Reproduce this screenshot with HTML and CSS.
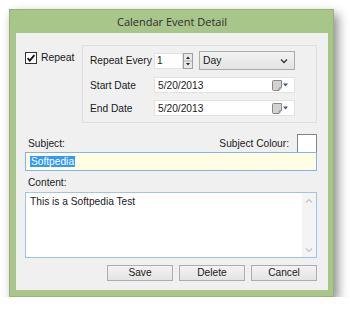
FILE: index.html
```html
<!DOCTYPE html>
<html>
<head>
<meta charset="utf-8">
<link rel="stylesheet" href="styles.css">
</head>
<body>
<div class="window">
  <div class="titlebar">Calendar Event Detail</div>
  <div class="client">
    <div class="top">
      <div class="repeat-check">
        <span class="cb"><svg width="12" height="12" viewBox="0 0 12 12"><rect x="0.5" y="0.5" width="11" height="11" fill="#fff" stroke="#333"/><path d="M2.6 6.2 L4.8 8.6 L9.4 3.2" fill="none" stroke="#111" stroke-width="1.8"/></svg></span>
        <span class="cb-label">Repeat</span>
      </div>
      <div class="group">
        <div class="lbl">Repeat Every</div>
        <div class="row1">
          <div class="spin">
            <div class="spin-input">1</div>
            <div class="spin-btns">
              <svg width="10" height="16" viewBox="0 0 10 16"><rect x="0.5" y="0.5" width="9" height="15" fill="#e8e8e8" stroke="#a0a0a0"/><line x1="1" y1="8" x2="9" y2="8" stroke="#b0b0b0"/><path d="M3 6 L5 3.5 L7 6 Z" fill="#222"/><path d="M3 10 L5 12.5 L7 10 Z" fill="#222"/></svg>
            </div>
          </div>
          <div class="select"><span>Day</span><svg width="8" height="6" viewBox="0 0 8 6"><path d="M1 1.5 L4 4.5 L7 1.5" fill="none" stroke="#333" stroke-width="1.3"/></svg></div>
        </div>
        <div class="lbl">Start Date</div>
        <div class="date"><span>5/20/2013</span><svg class="cal" width="17" height="11" viewBox="0 0 17 11"><path d="M0.5 1.5 Q0.5 0.5 1.5 0.5 L9.5 0.5 L9.5 7.5 L7 10.5 L1.5 10.5 Q0.5 10.5 0.5 9.5 Z" fill="#d2d2d2" stroke="#888"/><path d="M7 10.5 L7 8 L9.5 7.5" fill="#bdbdbd" stroke="#888" stroke-width="0.8"/><path d="M11 3.5 L16 3.5 L13.5 6.5 Z" fill="#3d5391"/></svg></div>
        <div class="lbl">End Date</div>
        <div class="date"><span>5/20/2013</span><svg class="cal" width="17" height="11" viewBox="0 0 17 11"><path d="M0.5 1.5 Q0.5 0.5 1.5 0.5 L9.5 0.5 L9.5 7.5 L7 10.5 L1.5 10.5 Q0.5 10.5 0.5 9.5 Z" fill="#d2d2d2" stroke="#888"/><path d="M7 10.5 L7 8 L9.5 7.5" fill="#bdbdbd" stroke="#888" stroke-width="0.8"/><path d="M11 3.5 L16 3.5 L13.5 6.5 Z" fill="#3d5391"/></svg></div>
      </div>
    </div>
    <div class="subject-row">
      <span class="lbl2">Subject:</span>
      <div class="colour">
        <span class="lbl2">Subject Colour:</span>
        <span class="swatch"></span>
      </div>
    </div>
    <div class="subject-input"><span class="sel">Softpedia</span></div>
    <div class="content-label">Content:</div>
    <div class="content">
      <div class="content-text">This is a Softpedia Test</div>
      <div class="scroll">
        <svg width="8" height="6" viewBox="0 0 8 6"><path d="M1 4.5 L4 1.5 L7 4.5" fill="none" stroke="#c4c4c4" stroke-width="1.2"/></svg>
        <svg width="8" height="6" viewBox="0 0 8 6"><path d="M1 1.5 L4 4.5 L7 1.5" fill="none" stroke="#c4c4c4" stroke-width="1.2"/></svg>
      </div>
    </div>
    <div class="buttons">
      <div class="btn">Save</div>
      <div class="btn">Delete</div>
      <div class="btn">Cancel</div>
    </div>
  </div>
</div>
</body>
</html>
```
FILE: styles.css
```css
html, body {
  margin: 0;
  padding: 0;
  background: #ffffff;
}
body {
  font-family: "Liberation Sans", Arial, sans-serif;
  font-size: 10px;
  color: #1a1a1a;
}
.window {
  margin: 9px 0 0 9px;
  width: 325px;
  height: 288px;
  box-sizing: border-box;
  background: #a8c58a;
  border: 1px solid #95b279;
  display: flex;
  flex-direction: column;
  box-shadow: 4px 5px 10px rgba(0, 0, 0, 0.45);
}
.titlebar {
  height: 23px;
  line-height: 24px;
  text-align: center;
  font-family: "Open Sans", "Noto Sans", sans-serif;
  font-size: 11px;
  color: #2e2e2e;
  padding-left: 1px;
}
.client {
  flex: 1;
  margin: 0 5px 6px 6px;
  background: #f0f0f0;
  box-sizing: border-box;
  padding: 12px 11px 9px 9px;
  display: flex;
  flex-direction: column;
}
.top {
  display: flex;
  height: 78px;
}
.repeat-check {
  width: 57px;
  padding-top: 7px;
  display: flex;
  align-items: flex-start;
  gap: 4px;
}
.cb {
  display: block;
  width: 12px;
  height: 12px;
}
.cb svg { display: block; }
.cb-label {
  line-height: 12px;
  font-size: 10.4px;
}
.group {
  flex: 1;
  border: 1px solid #dedede;
  padding: 5px 21px 0 7px;
  display: grid;
  grid-template-columns: 64px 1fr;
  grid-template-rows: 19px 16px 16px;
  row-gap: 7px;
  align-items: center;
}
.lbl {
  font-size: 10.2px;
  white-space: nowrap;
}
.row1 {
  display: flex;
  align-items: center;
  gap: 6px;
  height: 19px;
}
.spin {
  display: flex;
  height: 16px;
}
.spin-input {
  width: 29px;
  height: 16px;
  box-sizing: border-box;
  background: #fff;
  border: 1px solid #e2e2e2;
  padding-left: 2px;
  line-height: 14px;
}
.spin-btns svg { display: block; }
.select {
  flex: 1;
  height: 19px;
  box-sizing: border-box;
  border: 1px solid #acacac;
  background: linear-gradient(#f2f2f2, #e3e3e3);
  display: flex;
  align-items: center;
  justify-content: space-between;
  padding: 0 6px 0 3px;
  font-size: 10.4px;
}
.select svg { display: block; }
.date {
  height: 16px;
  box-sizing: border-box;
  background: #fff;
  border: 1px solid #e2e2e2;
  display: flex;
  align-items: center;
  justify-content: space-between;
  padding: 0 5px 0 3px;
  font-size: 10.2px;
}
.cal { display: block; }
.subject-row {
  margin-top: 11px;
  height: 18px;
  display: flex;
  justify-content: space-between;
  align-items: flex-start;
  padding-left: 3px;
}
.subject-row .lbl2 {
  line-height: 20px;
}
.lbl2 {
  font-size: 10.2px;
}
.colour {
  display: flex;
  align-items: flex-start;
  gap: 8px;
}
.swatch {
  display: block;
  width: 20px;
  height: 20px;
  box-sizing: border-box;
  background: #fff;
  border: 1px solid #858585;
}
.subject-input {
  height: 19px;
  box-sizing: border-box;
  background: #fffde4;
  border: 1px solid #84b5e8;
  display: flex;
  align-items: center;
  padding-left: 4px;
  font-size: 10.2px;
}
.sel {
  background: #3399ff;
  color: #fff;
  line-height: 11px;
  padding: 0 1px;
}
.content-label {
  margin-top: 5px;
  height: 14px;
  line-height: 14px;
  padding-left: 3px;
  font-size: 10.2px;
}
.content {
  margin-top: 2px;
  height: 66px;
  box-sizing: border-box;
  background: #fff;
  border: 1px solid #9cc4ee;
  display: flex;
}
.content-text {
  flex: 1;
  padding: 3px 4px;
  font-size: 10.2px;
}
.scroll {
  width: 14px;
  background: #f4f4f4;
  display: flex;
  flex-direction: column;
  justify-content: space-between;
  align-items: center;
  padding: 5px 0 4px;
}
.scroll svg { display: block; }
.buttons {
  margin-top: 7px;
  display: flex;
  justify-content: flex-end;
  gap: 6px;
}
.btn {
  width: 66px;
  height: 16px;
  box-sizing: border-box;
  border: 1px solid #adadad;
  background: linear-gradient(#f3f3f3, #e4e4e4);
  text-align: center;
  line-height: 14px;
  font-size: 10.2px;
}
```
